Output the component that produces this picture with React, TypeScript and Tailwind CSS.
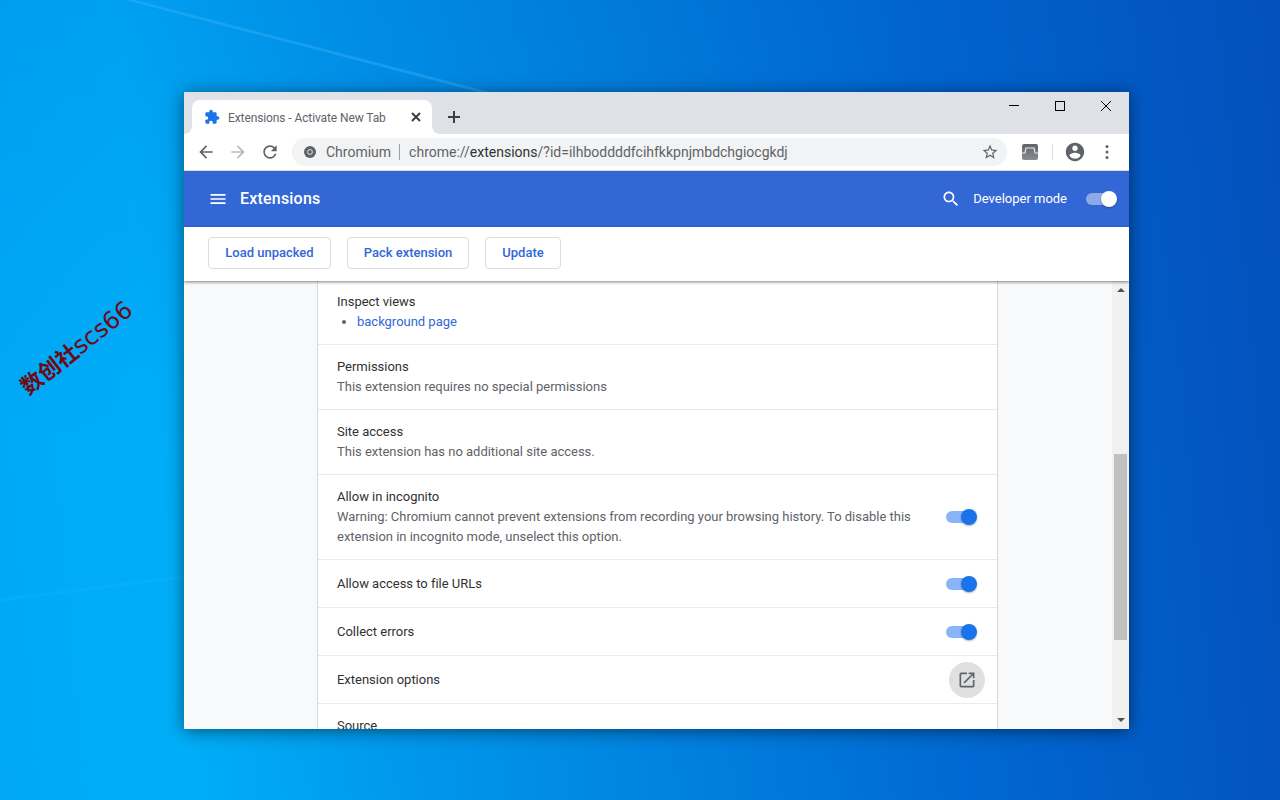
import React from "react";

const font = { fontFamily: "Roboto, 'Noto Sans', sans-serif" };

function Icon({ d, className }: { d: string; className: string }) {
  return (
    <svg viewBox="0 0 24 24" className={className} fill="currentColor">
      <path d={d} />
    </svg>
  );
}

const PUZZLE =
  "M20.5 11H19V7c0-1.1-.9-2-2-2h-4V3.5C13 2.12 11.88 1 10.5 1S8 2.12 8 3.5V5H4c-1.1 0-1.99.9-1.99 2v3.8H3.5c1.49 0 2.7 1.21 2.7 2.7s-1.21 2.7-2.7 2.7H2V20c0 1.1.9 2 2 2h3.8v-1.5c0-1.49 1.21-2.7 2.7-2.7 1.49 0 2.7 1.21 2.7 2.7V22H17c1.1 0 2-.9 2-2v-4h1.5c1.38 0 2.5-1.12 2.5-2.5S21.88 11 20.5 11z";
const ARROW =
  "M20 11H7.83l5.59-5.59L12 4l-8 8 8 8 1.41-1.41L7.83 13H20v-2z";
const RELOAD =
  "M17.65 6.35C16.2 4.9 14.21 4 12 4c-4.42 0-7.99 3.58-7.99 8s3.57 8 7.99 8c3.73 0 6.84-2.55 7.73-6h-2.08c-.82 2.33-3.04 4-5.65 4-3.31 0-6-2.69-6-6s2.69-6 6-6c1.66 0 3.14.69 4.22 1.78L13 11h7V4l-2.35 2.35z";
const STAR =
  "M22 9.24l-7.19-.62L12 2 9.19 8.63 2 9.24l5.46 4.73L5.82 21 12 17.27 18.18 21l-1.63-7.03L22 9.24zM12 15.4l-3.76 2.27 1-4.28-3.32-2.88 4.38-.38L12 6.1l1.71 4.04 4.38.38-3.32 2.88 1 4.28L12 15.4z";
const ACCOUNT =
  "M12 2C6.48 2 2 6.48 2 12s4.48 10 10 10 10-4.48 10-10S17.52 2 12 2zm0 3c1.66 0 3 1.34 3 3s-1.34 3-3 3-3-1.34-3-3 1.34-3 3-3zm0 14.2c-2.5 0-4.71-1.28-6-3.22.03-1.99 4-3.08 6-3.08 1.99 0 5.97 1.09 6 3.08-1.29 1.94-3.5 3.22-6 3.22z";
const SEARCH =
  "M15.5 14h-.79l-.28-.27C15.41 12.59 16 11.11 16 9.5 16 5.91 13.09 3 9.5 3S3 5.91 3 9.5 5.91 16 9.5 16c1.61 0 3.09-.59 4.23-1.57l.27.28v.79l5 4.99L20.49 19l-4.99-5zm-6 0C7.01 14 5 11.99 5 9.5S7.01 5 9.5 5 14 7.01 14 9.5 11.99 14 9.5 14z";
const OPEN =
  "M19 19H5V5h7V3H5c-1.11 0-2 .9-2 2v14c0 1.1.89 2 2 2h14c1.1 0 2-.9 2-2v-7h-2v7zM14 3v2h3.59l-9.83 9.83 1.41 1.41L19 6.41V10h2V3h-7z";
const MENU = "M3 18h18v-2H3v2zm0-5h18v-2H3v2zm0-7v2h18V6H3z";

function Toggle() {
  return (
    <div className="relative w-[31px] h-[16px] shrink-0">
      <div className="absolute left-0 top-[2px] w-[28px] h-[12px] rounded-full bg-[#8ab4f8]" />
      <div className="absolute right-0 top-0 w-[16px] h-[16px] rounded-full bg-[#1a73e8] shadow-[0_1px_2px_rgba(0,0,0,0.3)]" />
    </div>
  );
}

function TextRow({ title, desc }: { title: string; desc: string }) {
  return (
    <div className="border-t border-[#e8eaed] pl-[19px] pr-5 py-3 leading-5">
      <div className="text-[#303134]">{title}</div>
      <div className="text-[#5f6368]">{desc}</div>
    </div>
  );
}

function ToggleRow({ title }: { title: string }) {
  return (
    <div className="border-t border-[#e8eaed] pl-[19px] pr-5 h-[48px] flex items-center justify-between text-[#303134]">
      <span>{title}</span>
      <Toggle />
    </div>
  );
}

function ActionButton({ className, children }: { className: string; children: React.ReactNode }) {
  return (
    <div className={"h-[32px] flex items-center justify-center rounded border border-[#dadce0] text-[#3367d6] text-[13px] font-medium bg-white " + className}>
      {children}
    </div>
  );
}

export default function App() {
  return (
    <div
      className="relative w-[1280px] h-[800px] overflow-hidden bg-[linear-gradient(85deg,#00a8f6_0%,#00aef8_14%,#0098ec_30%,#0082e0_50%,#0068d2_72%,#0450bc_100%)]"
      style={font}
    >
      {/* darker sky towards the top of the wallpaper */}
      <div className="absolute inset-0 bg-[linear-gradient(180deg,rgba(0,80,190,0.14),transparent_55%)]" />

      {/* desktop wallpaper light beams */}
      <svg className="absolute inset-0" width="1280" height="800" viewBox="0 0 1280 800">
        <polygon points="125,0 135,0 490,92 478,92" fill="#38b0f8" opacity="0.45" />
        <polygon points="0,598 190,574 190,578 0,602" fill="#30c0ff" opacity="0.14" />
      </svg>

      <div
        className="absolute left-[9px] top-[336px] text-[24px] leading-none text-[#6d0a14] whitespace-nowrap origin-center rotate-[-38deg]"
        style={{ fontFamily: "'DejaVu Sans', 'Noto Sans CJK SC', sans-serif" }}
      >
        <span className="text-[22px] font-bold">数创社</span>
        scs66
      </div>

      {/* browser window */}
      <div className="absolute left-[184px] top-[92px] w-[945px] h-[637px] flex flex-col overflow-hidden bg-white text-[13px] tracking-[-0.015px] shadow-[0_2px_16px_rgba(0,0,0,0.5)]">
        {/* tab strip */}
        <div className="h-[42px] shrink-0 bg-[#dee1e6] flex items-end pl-2 relative">
          <div className="relative w-[240px] h-[34px] bg-white rounded-t-lg flex items-center pl-[12px] pr-[11px] text-[12px] tracking-[-0.1px] text-[#5f6368]">
            <svg viewBox="0 0 8 8" className="absolute -left-2 bottom-0 w-2 h-2 text-white" fill="currentColor">
              <path d="M8 0v8H0c4.4 0 8-3.6 8-8z" />
            </svg>
            <svg viewBox="0 0 8 8" className="absolute -right-2 bottom-0 w-2 h-2 text-white" fill="currentColor">
              <path d="M0 0v8h8C3.6 8 0 4.4 0 0z" />
            </svg>
            <Icon d={PUZZLE} className="w-4 h-4 text-[#1a73e8] shrink-0" />
            <span className="ml-2 flex-1 truncate pt-[2px]">Extensions - Activate New Tab</span>
            <svg viewBox="0 0 10 10" className="w-[10px] h-[10px] text-[#3c4043]" stroke="currentColor" strokeWidth="2">
              <path d="M1 1l8 8M9 1l-8 8" />
            </svg>
          </div>
          <svg viewBox="0 0 12 12" className="w-[12px] h-[12px] ml-[16px] mb-[11px] text-[#3c4043]" stroke="currentColor" strokeWidth="2">
            <path d="M6 0v12M0 6h12" />
          </svg>
          <div className="absolute right-0 top-0 flex text-black">
            <div className="w-[46px] h-[27px] flex items-center justify-center">
              <div className="w-[10px] h-px bg-black" />
            </div>
            <div className="w-[46px] h-[27px] flex items-center justify-center">
              <div className="w-[10px] h-[10px] border border-black" />
            </div>
            <div className="w-[46px] h-[27px] flex items-center justify-center">
              <svg viewBox="0 0 10 10" className="w-[10px] h-[10px]" stroke="currentColor" strokeWidth="1">
                <path d="M0 0l10 10M10 0L0 10" />
              </svg>
            </div>
          </div>
        </div>

        {/* toolbar */}
        <div className="h-[37px] shrink-0 bg-white flex items-center border-b border-[#dadce0] pl-[12px] pr-[14px]">
          <Icon d={ARROW} className="w-[20px] h-[20px] text-[#5f6368]" />
          <svg viewBox="0 0 24 24" className="w-[20px] h-[20px] text-[#b8babd] ml-[12px] scale-x-[-1]" fill="currentColor">
            <path d={ARROW} />
          </svg>
          <Icon d={RELOAD} className="w-[20px] h-[20px] text-[#5f6368] ml-[12px]" />
          <div className="ml-[12px] w-[715px] h-[28px] rounded-full bg-[#f1f3f4] flex items-center pl-[12px] pr-[8px]">
            <svg viewBox="0 0 16 16" className="w-[12px] h-[12px]">
              <circle cx="8" cy="8" r="8" fill="#5f6368" />
              <circle cx="8" cy="8" r="3.6" fill="#f1f3f4" />
              <circle cx="8" cy="8" r="2.6" fill="#5f6368" />
            </svg>
            <span className="ml-[10px] text-[#5f6368] text-[14px] tracking-normal">Chromium</span>
            <div className="ml-[8px] w-px h-[16px] bg-[#9aa0a6]" />
            <div className="ml-[9px] text-[14px] flex-1 text-[#5f6368] tracking-normal">
              chrome://<span className="text-[#303134]">extensions</span>/?id=ilhboddddfcihfkkpnjmbdchgiocgkdj
            </div>
            <Icon d={STAR} className="w-[18px] h-[18px] text-[#5f6368]" />
          </div>
          <svg viewBox="0 0 16 16" className="w-[16px] h-[16px] ml-[15px]">
            <defs>
              <linearGradient id="ext" x1="0" y1="0" x2="0" y2="1">
                <stop offset="0" stopColor="#5f6368" />
                <stop offset="1" stopColor="#8a8d91" />
              </linearGradient>
            </defs>
            <rect width="16" height="16" rx="2" fill="url(#ext)" />
            <path d="M0 9h3l1-5h8l1 5h3" fill="none" stroke="#e8eaed" strokeWidth="1.2" />
          </svg>
          <div className="ml-[14px] w-px h-[16px] bg-[#dadce0]" />
          <Icon d={ACCOUNT} className="w-[22px] h-[22px] text-[#5f6368] ml-[11px]" />
          <svg viewBox="0 0 4 16" className="w-[4px] h-[16px] ml-[19px] text-[#5f6368]" fill="currentColor">
            <circle cx="2" cy="2.5" r="1.5" />
            <circle cx="2" cy="8" r="1.5" />
            <circle cx="2" cy="13.5" r="1.5" />
          </svg>
        </div>

        {/* extensions header */}
        <div className="h-[56px] shrink-0 bg-[#3367d6] flex items-center text-white pl-[24px] pr-[12px]">
          <Icon d={MENU} className="w-[20px] h-[20px]" />
          <span className="ml-[12px] text-[16px] tracking-[0.2px] font-medium">Extensions</span>
          <div className="flex-1" />
          <Icon d={SEARCH} className="w-[20px] h-[20px]" />
          <span className="ml-[12px] text-[13px]">Developer mode</span>
          <div className="relative w-[31px] h-[16px] ml-[19px]">
            <div className="absolute left-0 top-[2px] w-[28px] h-[12px] rounded-full bg-[#8ea9e8]" />
            <div className="absolute right-0 top-0 w-[16px] h-[16px] rounded-full bg-white shadow-[0_1px_2px_rgba(0,0,0,0.3)]" />
          </div>
        </div>

        {/* action bar */}
        <div className="h-[54px] shrink-0 bg-white flex items-center gap-[16px] pl-[24px] pb-[2px] relative z-10 shadow-[0_1px_3px_rgba(0,0,0,0.5)]">
          <ActionButton className="w-[123px]">Load unpacked</ActionButton>
          <ActionButton className="w-[122px]">Pack extension</ActionButton>
          <ActionButton className="w-[76px]">Update</ActionButton>
        </div>

        {/* scrolling content */}
        <div className="flex-1 min-h-0 flex bg-[#f8f9fa]">
          <div className="flex-1 overflow-hidden pl-[133px]">
            <div className="w-[681px] bg-white border-x border-[#d6d8db]">
              <div className="pl-[19px] pr-5 pt-[11px] pb-[12px] leading-5 text-[#303134]">
                <div>Inspect views</div>
                <ul className="list-disc pl-5 text-[#5f6368]">
                  <li>
                    <span className="text-[#3367d6]">background page</span>
                  </li>
                </ul>
              </div>
              <TextRow title="Permissions" desc="This extension requires no special permissions" />
              <TextRow title="Site access" desc="This extension has no additional site access." />
              <div className="border-t border-[#e8eaed] pl-[19px] pr-5 py-3 flex items-center justify-between leading-5">
                <div className="w-[590px]">
                  <div className="text-[#303134]">Allow in incognito</div>
                  <div className="text-[#5f6368]">
                    Warning: Chromium cannot prevent extensions from recording your browsing history. To disable this extension in incognito mode, unselect this option.
                  </div>
                </div>
                <Toggle />
              </div>
              <ToggleRow title="Allow access to file URLs" />
              <ToggleRow title="Collect errors" />
              <div className="border-t border-[#e8eaed] pl-[19px] pr-3 h-[48px] flex items-center justify-between text-[#303134]">
                <span>Extension options</span>
                <div className="w-[36px] h-[36px] rounded-full bg-[#e0e0e0] flex items-center justify-center">
                  <Icon d={OPEN} className="w-[20px] h-[20px] text-[#5f6368]" />
                </div>
              </div>
              <div className="border-t border-[#e8eaed] pl-[19px] pr-5 pt-3 leading-5 text-[#303134] h-[60px]">Source</div>
            </div>
          </div>

          {/* scrollbar */}
          <div className="w-[17px] shrink-0 bg-[#f1f1f1] flex flex-col items-center relative">
            <div className="mt-[7px] w-0 h-0 border-x-[4px] border-x-transparent border-b-[4px] border-b-[#505050]" />
            <div className="absolute left-[2px] top-[173px] w-[13px] h-[186px] bg-[#c1c1c1]" />
            <div className="absolute bottom-[7px] w-0 h-0 border-x-[4px] border-x-transparent border-t-[4px] border-t-[#505050]" />
          </div>
        </div>
      </div>
    </div>
  );
}
